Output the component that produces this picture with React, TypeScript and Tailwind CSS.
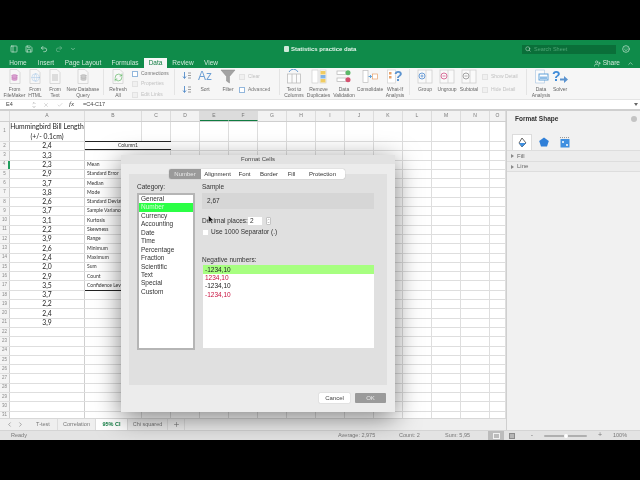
import React from "react";
import { ChevronUp, ChevronDown, Search, Smile, UserPlus, X, Check, Plus, ChevronLeft, ChevronRight, Undo2, Redo2, Save, PanelLeft, RefreshCw, Globe, Database } from "lucide-react";

const colWidths = [10, 75, 57, 29, 29, 29, 29, 29, 29, 29, 29, 29, 29, 29, 29, 16];
const colNames = ["", "A", "B", "C", "D", "E", "F", "G", "H", "I", "J", "K", "L", "M", "N", "O"];
const values = ["2,4", "3,3", "2,3", "2,9", "3,7", "3,8", "2,6", "3,7", "3,1", "2,2", "3,9", "2,6", "2,4", "2,0", "2,9", "3,5", "3,7", "2,2", "2,4", "3,9"];
const stats: Record<number, string> = {
  4: "Mean", 5: "Standard Error", 6: "Median", 7: "Mode", 8: "Standard Deviation", 9: "Sample Variance", 10: "Kurtosis",
  11: "Skewness", 12: "Range", 13: "Minimum", 14: "Maximum", 15: "Sum", 16: "Count", 17: "Confidence Level(95,0%)",
};
const categories = ["General", "Number", "Currency", "Accounting", "Date", "Time", "Percentage", "Fraction", "Scientific", "Text", "Special", "Custom"];
const tabs = [
  { label: "Home", w: "w-[28px]" }, { label: "Insert", w: "w-[28px]" }, { label: "Page Layout", w: "w-[46px]" }, { label: "Formulas", w: "w-[38px]" },
  { label: "Data", w: "w-[23px]", active: true }, { label: "Review", w: "w-[32px]" }, { label: "View", w: "w-[24px]" },
];

function DocIcon({ children }: { children?: React.ReactNode }) {
  return (
    <span className="relative flex items-center justify-center w-[14px] h-[15px]">
      <svg width="14" height="15" viewBox="0 0 14 15">
        <path d="M2 .5h7l3 3v11H2z" fill="#f7f7f7" stroke="#d2d2d2" strokeWidth="0.8" />
      </svg>
      <span className="absolute inset-0 flex items-center justify-center pt-[2px]">{children}</span>
    </span>
  );
}

function FilterIcon() {
  return (
    <svg width="16" height="15" viewBox="0 0 16 15">
      <path d="M1 1h14L9.500 7.500V14l-3-2V7.500z" fill="#a3a3a3" stroke="#8a8a8a" strokeWidth="0.5" />
    </svg>
  );
}

function GroupIcon({ accent, mark }: { accent: string; mark: string }) {
  return (
    <svg width="16" height="15" viewBox="0 0 16 15">
      <rect x="1" y="1" width="14" height="13" fill="#fafafa" stroke="#cfcfcf" strokeWidth="0.8" />
      <path d="M9 1v13" stroke="#cfcfcf" strokeWidth="0.8" />
      <circle cx="5" cy="7" r="3" fill="none" stroke={accent} strokeWidth="0.9" />
      <path d={mark} stroke={accent} strokeWidth="0.8" />
    </svg>
  );
}

function TextToColumnsIcon() {
  return (
    <svg width="16" height="15" viewBox="0 0 16 15">
      <path d="M3 3 A5 5 0 0 1 12 3" fill="none" stroke="#5b93cf" strokeWidth="0.9" />
      <rect x="1.500" y="5" width="13" height="9" fill="#fbfbfb" stroke="#bdbdbd" strokeWidth="0.8" />
      <path d="M6 5v9M10.500 5v9" stroke="#bdbdbd" strokeWidth="0.8" />
    </svg>
  );
}

function DuplicatesIcon() {
  return (
    <svg width="16" height="15" viewBox="0 0 16 15">
      <rect x="1" y="1" width="6" height="13" fill="#fff" stroke="#cfcfcf" strokeWidth="0.7" />
      <rect x="9" y="1" width="6" height="13" fill="#fff" stroke="#cfcfcf" strokeWidth="0.7" />
      <rect x="9.500" y="2" width="5" height="3.500" fill="#f0cc62" />
      <rect x="9.500" y="6" width="5" height="3.500" fill="#7fb2e5" />
      <rect x="9.500" y="10" width="5" height="3.500" fill="#f0cc62" />
    </svg>
  );
}

function ValidationIcon() {
  return (
    <svg width="16" height="15" viewBox="0 0 16 15">
      <rect x="1" y="2" width="9" height="3.500" fill="#fff" stroke="#b5b5b5" strokeWidth="0.7" />
      <rect x="1" y="9" width="9" height="3.500" fill="#fff" stroke="#b5b5b5" strokeWidth="0.7" />
      <circle cx="12" cy="3.700" r="2.500" fill="#5cb868" />
      <circle cx="12" cy="10.700" r="2.500" fill="#d4506e" />
    </svg>
  );
}

function ConsolidateIcon() {
  return (
    <svg width="16" height="15" viewBox="0 0 16 15">
      <rect x="1" y="1.500" width="5" height="12" fill="#fff" stroke="#bdbdbd" strokeWidth="0.7" />
      <rect x="10.500" y="5" width="5" height="5" fill="#fff" stroke="#e8a26a" strokeWidth="0.7" />
      <path d="M6.500 7.500h3M8 6l1.500 1.500L8 9" fill="none" stroke="#4f97d6" strokeWidth="0.9" />
    </svg>
  );
}

function WhatIfIcon() {
  return (
    <span className="flex items-center w-[16px] h-[15px] relative">
      <svg width="10" height="15" viewBox="0 0 10 15">
        <rect x=".5" y="1" width="8" height="13" fill="#fff" stroke="#d2d2d2" strokeWidth="0.7" />
        <rect x="2" y="3" width="2.500" height="2.500" fill="#e8a26a" />
        <rect x="2" y="7" width="2.500" height="2.500" fill="#e8a26a" />
      </svg>
      <span className="text-[14px] leading-[15px] font-bold text-[#5b93cf] -ml-[3px]">?</span>
    </span>
  );
}

function AnalysisIcon() {
  return (
    <svg width="15" height="15" viewBox="0 0 15 15">
      <path d="M1.500 1h9v13h-9z" fill="#fbfbfb" stroke="#b9cfe6" strokeWidth="0.8" />
      <rect x="5" y="5" width="9" height="6" fill="#fff" stroke="#4f97d6" strokeWidth="0.9" />
      <rect x="6" y="7.500" width="7" height="2.500" fill="#8fbde6" />
    </svg>
  );
}

function SolverIcon() {
  return (
    <span className="flex items-center relative w-[16px] h-[15px]">
      <span className="text-[14px] leading-[15px] font-bold text-[#3f8bd8]">?</span>
      <svg width="8" height="7" viewBox="0 0 8 7" className="-ml-[1px] mt-[6px]">
        <path d="M0 2.500h4V0l4 3.500L4 7V4.500H0z" fill="#5b93cf" />
      </svg>
    </span>
  );
}

function SortIcon() {
  return (
    <svg width="10" height="7" viewBox="0 0 10 7">
      <path d="M2.500 0v6M1 4.500 2.500 6.500 4 4.500" fill="none" stroke="#3f7fc4" strokeWidth="0.8" />
      <path d="M6 1h3M6 3.500h3M6 6h3" stroke="#888" strokeWidth="0.8" />
    </svg>
  );
}

function RibbonItem({ w, icon, lines }: { w: string; icon: React.ReactNode; lines: string[] }) {
  return (
    <div className={`${w} shrink-0 flex flex-col items-center`}>
      <div className="h-[15px] flex items-center justify-center">{icon}</div>
      <div className="text-[5px] leading-[6px] text-[#666] text-center whitespace-nowrap mt-[2px]">
        {lines.map((l) => (
          <div key={l}>{l}</div>
        ))}
      </div>
    </div>
  );
}

type StackItem = { label: string; on?: boolean };

function SmallStack({ w, items, gap, top }: { w: string; items: StackItem[]; gap: string; top: string }) {
  return (
    <div className={`${w} ${gap} ${top} shrink-0 flex flex-col`}>
      {items.map((t) => (
        <div key={t.label} className="flex items-center gap-[3px] h-[7px]">
          <span className={`w-[6px] h-[6px] border ${t.on ? "border-[#93b7dc] bg-white" : "border-[#e2e2e2] bg-[#f0f0f0]"}`} />
          <span className={`text-[5px] whitespace-nowrap ${t.on ? "text-[#777]" : "text-[#c2c2c2]"}`}>{t.label}</span>
        </div>
      ))}
    </div>
  );
}

function Sep() {
  return <div className="w-px h-[26px] bg-[#e4e4e4] shrink-0 mx-[2px]" />;
}

function Ribbon() {
  return (
    <div className="h-[32px] bg-[#f6f6f6] flex items-start pl-[4px] pt-[1px] border-b border-[#e4e4e4] overflow-hidden">
      <RibbonItem w="w-[21px]" icon={<DocIcon><Database size={7} color="#b64fa5" fill="#d8a0cf" strokeWidth={1} /></DocIcon>} lines={["From", "FileMaker"]} />
      <RibbonItem w="w-[20px]" icon={<DocIcon><Globe size={9} color="#8fb8e3" strokeWidth={1} /></DocIcon>} lines={["From", "HTML"]} />
      <RibbonItem w="w-[20px]" icon={<DocIcon><span className="w-[6px] h-[7px] bg-[#dcdcdc]" /></DocIcon>} lines={["From", "Text"]} />
      <RibbonItem w="w-[36px]" icon={<DocIcon><Database size={7} color="#999" fill="#ccc" strokeWidth={1} /></DocIcon>} lines={["New Database", "Query"]} />
      <Sep />
      <RibbonItem w="w-[24px]" icon={<DocIcon><RefreshCw size={9} color="#4caf50" strokeWidth={1.6} /></DocIcon>} lines={["Refresh", "All"]} />
      <div className="w-[2px] shrink-0" />
      <SmallStack
        w="w-[40px]"
        gap="gap-[3.500px]"
        top="pt-[1px]"
        items={[{ label: "Connections", on: true }, { label: "Properties" }, { label: "Edit Links" }]}
      />
      <Sep />
      <div className="w-[16px] shrink-0 ml-[2px] flex flex-col items-center gap-[7px] pt-[3px]">
        <SortIcon />
        <SortIcon />
      </div>
      <RibbonItem w="w-[20px]" icon={<span className="text-[12px] leading-[15px] text-[#6c9fd4]">Az</span>} lines={["Sort"]} />
      <div className="w-[2px] shrink-0" />
      <RibbonItem w="w-[22px]" icon={<FilterIcon />} lines={["Filter"]} />
      <SmallStack w="w-[38px]" gap="gap-[6px]" top="pt-[4px]" items={[{ label: "Clear" }, { label: "Advanced", on: true }]} />
      <Sep />
      <RibbonItem w="w-[24px]" icon={<TextToColumnsIcon />} lines={["Text to", "Columns"]} />
      <RibbonItem w="w-[25px]" icon={<DuplicatesIcon />} lines={["Remove", "Duplicates"]} />
      <RibbonItem w="w-[26px]" icon={<ValidationIcon />} lines={["Data", "Validation"]} />
      <RibbonItem w="w-[26px]" icon={<ConsolidateIcon />} lines={["Consolidate"]} />
      <RibbonItem w="w-[24px]" icon={<WhatIfIcon />} lines={["What-If", "Analysis"]} />
      <Sep />
      <div className="w-[2px] shrink-0" />
      <RibbonItem w="w-[22px]" icon={<GroupIcon accent="#5c93d1" mark="M3.500 7h3M5 5.500v3" />} lines={["Group"]} />
      <RibbonItem w="w-[22px]" icon={<GroupIcon accent="#d4608f" mark="M3.500 7h3" />} lines={["Ungroup"]} />
      <RibbonItem w="w-[22px]" icon={<GroupIcon accent="#999999" mark="M3.500 7h3" />} lines={["Subtotal"]} />
      <div className="w-[2px] shrink-0" />
      <SmallStack w="w-[42px]" gap="gap-[6px]" top="pt-[4px]" items={[{ label: "Show Detail" }, { label: "Hide Detail" }]} />
      <Sep />
      <div className="w-[2px] shrink-0" />
      <RibbonItem w="w-[20px]" icon={<AnalysisIcon />} lines={["Data", "Analysis"]} />
      <RibbonItem w="w-[18px]" icon={<SolverIcon />} lines={["Solver"]} />
    </div>
  );
}

function ColumnHeader() {
  return (
    <div className="flex h-[11px] bg-[#f2f2f2] border-b border-[#cfcfcf] shrink-0">
      {colNames.map((name, i) => (
        <div
          key={i}
          style={{ width: colWidths[i] }}
          className={`shrink-0 h-full flex items-center justify-center text-[5px] text-[#777] border-r border-[#dcdcdc] ${name === "E" || name === "F" ? "bg-[#dcdcdc] border-b border-b-[#107c41]" : ""}`}
        >
          {name}
        </div>
      ))}
    </div>
  );
}

function SheetRow({ row }: { row: number }) {
  const value = row >= 2 && row <= 21 ? values[row - 2] : null;
  const stat = stats[row];
  return (
    <div className={`flex shrink-0 ${row === 1 ? "h-[20px]" : "h-[9.3px]"} border-b border-[#dedede]`}>
      <div
        style={{ width: colWidths[0] }}
        className={`shrink-0 flex items-center justify-center text-[4.500px] text-[#888] bg-[#f4f4f4] ${row === 4 ? "border-r-2 border-[#1f9d5c]" : "border-r border-[#cfcfcf]"}`}
      >
        {row}
      </div>
      <div style={{ width: colWidths[1] }} className="shrink-0 flex flex-col items-center justify-center border-r border-[#cfcfcf] font-['Lato',sans-serif] text-[6.800px] leading-[9.500px] text-[#222] bg-white whitespace-nowrap">
        {row === 1 ? (
          <>
            <div>Hummingbird Bill Length</div>
            <div>(+/- 0.1cm)</div>
          </>
        ) : (
          value
        )}
      </div>
      {row === 2 ? (
        <div style={{ width: colWidths[2] + colWidths[3] }} className="shrink-0 -mt-px h-[calc(100%+1px)] flex items-center justify-center border-t border-b border-[#222] font-['Lato',sans-serif] text-[5px] text-[#333] bg-white">
          Column1
        </div>
      ) : (
        <>
          <div
            style={{ width: colWidths[2] }}
            className={`shrink-0 flex items-center pl-[2px] font-['Lato',sans-serif] text-[5px] text-[#333] bg-white whitespace-nowrap border-r ${row === 3 || stat ? "border-transparent" : "border-[#dedede]"} ${row === 17 ? "-mb-px h-[calc(100%+1px)] border-b border-b-[#222]" : ""}`}
          >
            {stat}
          </div>
          <div style={{ width: colWidths[3] }} className={`shrink-0 bg-white border-r border-[#dedede] ${row === 17 ? "-mb-px h-[calc(100%+1px)] border-b border-b-[#222]" : ""}`} />
        </>
      )}
      {colWidths.slice(4).map((w, i) => (
        <div key={i} style={{ width: w }} className="shrink-0 bg-white border-r border-[#dedede]" />
      ))}
    </div>
  );
}

function SheetTabs() {
  const sheets = [
    { name: "T-test", w: "w-[29px]" },
    { name: "Correlation", w: "w-[38px]" },
    { name: "95% CI", w: "w-[32px]", active: true },
    { name: "Chi squared", w: "w-[40px]" },
  ];
  return (
    <div className="h-[12px] bg-[#efefef] border-t border-[#d8d8d8] flex items-center shrink-0">
      <div className="w-[29px] shrink-0 flex items-center justify-center gap-[4px] text-[#777]">
        <ChevronLeft size={7} strokeWidth={2} />
        <ChevronRight size={7} strokeWidth={2} />
      </div>
      {sheets.map((s) => (
        <div
          key={s.name}
          className={`${s.w} shrink-0 h-full flex items-center justify-center text-[5.500px] border-r border-[#dcdcdc] ${s.active ? "bg-white text-[#107c41] font-semibold" : "text-[#777]"}`}
        >
          {s.name}
        </div>
      ))}
      <div className="w-[17px] shrink-0 h-full flex items-center justify-center border-r border-[#dcdcdc] text-[#777]">
        <Plus size={7} strokeWidth={2} />
      </div>
    </div>
  );
}

function FormatPanel() {
  return (
    <div className="w-[134px] shrink-0 bg-[#f1f1f1] border-l border-[#cfcfcf] flex flex-col">
      <div className="h-[16px] flex items-center justify-between pl-[8px] pr-[3px]">
        <span className="text-[6.500px] font-bold text-[#333]">Format Shape</span>
        <span className="w-[6px] h-[6px] rounded-full bg-[#c4c4c4]" />
      </div>
      <div className="flex items-end pl-[5px] h-[23px]">
        <div className="w-[20px] h-[16px] bg-white border border-b-0 border-[#dcdcdc] flex items-center justify-center">
          <svg width="11" height="11" viewBox="0 0 11 11">
            <path d="M5 1 L9 6 L5 10 L2 6 Z" fill="none" stroke="#555" strokeWidth="0.9" />
            <path d="M2 6 L9 6 L5 10 Z" fill="#3f8fe0" />
          </svg>
        </div>
        <div className="w-[22px] h-[16px] flex items-center justify-center ml-[1px]">
          <svg width="10" height="10" viewBox="0 0 10 10">
            <path d="M5 .5 L9.800 4 L8 9.500 H2 L.2 4 Z" fill="#2f7fd8" />
          </svg>
        </div>
        <div className="w-[20px] h-[16px] flex items-center justify-center">
          <svg width="10" height="11" viewBox="0 0 10 11">
            <rect x=".5" y="2" width="9" height="8.500" fill="#3f8fe0" />
            <path d="M0 .6H10" stroke="#777" strokeWidth=".8" strokeDasharray="1 1" />
            <circle cx="3" cy="5" r="1" fill="#fff" />
            <circle cx="7" cy="8" r="1" fill="#fff" />
          </svg>
        </div>
      </div>
      {["Fill", "Line"].map((s) => (
        <div key={s} className="h-[11px] bg-[#ececec] border-t border-[#dddddd] flex items-center pl-[4px] gap-[3px] last:border-b">
          <span className="border-y-[2px] border-l-[3px] border-y-transparent border-l-[#888]" />
          <span className="text-[6px] text-[#666]">{s}</span>
        </div>
      ))}
    </div>
  );
}

function StatusBar() {
  return (
    <div className="h-[10px] bg-[#e3e3e3] border-t border-[#d4d4d4] flex items-center text-[5.500px] text-[#777] shrink-0">
      <span className="pl-[11px] w-[338px] shrink-0">Ready</span>
      <span className="w-[61px] shrink-0 whitespace-nowrap">Average: 2,975</span>
      <span className="w-[46px] shrink-0 whitespace-nowrap">Count: 2</span>
      <span className="w-[43px] shrink-0 whitespace-nowrap">Sum: 5,95</span>
      <div className="w-[16px] h-full shrink-0 bg-[#bcbcbc] flex items-center justify-center">
        <span className="w-[7px] h-[6px] border border-[#f2f2f2]" />
      </div>
      <div className="w-[16px] shrink-0 flex items-center justify-center">
        <span className="w-[6px] h-[6px] border border-[#8a8a8a] bg-[#b5b5b5]" />
      </div>
      <span className="w-[24px] shrink-0 text-center text-[7px]">-</span>
      <div className="w-[43px] h-[2px] rounded-full bg-[#b0b0b0] shrink-0 flex items-center pl-[20px]">
        <span className="w-[4px] h-[4px] rounded-full bg-white" />
      </div>
      <span className="w-[26px] shrink-0 text-center text-[7px]">+</span>
      <span className="whitespace-nowrap">100%</span>
    </div>
  );
}

function FormatCellsDialog() {
  return (
    <div className="absolute left-[121px] top-[155px] w-[274px] h-[257px] bg-[#ececec] rounded-t-[3px] shadow-[0_6px_26px_rgba(0,0,0,0.5)] flex flex-col px-[8px] text-[6.500px] text-[#333]">
      <div className="h-[9px] -mx-[8px] bg-[#e2e2e2] flex items-center justify-center text-[6px] text-[#444] shrink-0">Format Cells</div>
      <div className="relative mt-[10px] h-[211px] bg-[#e0e0e0] px-[8px] shrink-0">
        <div className="absolute -top-[5px] left-[40px] w-[176px] h-[10px] bg-white rounded-[2px] shadow-[0_0_1px_rgba(0,0,0,0.4)] flex items-center text-[6px] text-[#333]">
          <span className="w-[32px] h-full rounded-l-[2px] bg-[#9a9a9a] text-[#e8e8e8] flex items-center justify-center">Number</span>
          <span className="w-[33px] text-center">Alignment</span>
          <span className="w-[21px] text-center">Font</span>
          <span className="w-[28px] text-center">Border</span>
          <span className="w-[17px] text-center">Fill</span>
          <span className="w-[45px] text-center">Protection</span>
        </div>
        <div className="flex pt-[8px]">
          <div className="w-[58px] shrink-0">
            <div className="h-[11px] leading-[10px]">Category:</div>
            <div className="h-[157px] bg-white border-2 border-[#b5b5b5]">
              {categories.map((c) => (
                <div key={c} className={`h-[8.450px] leading-[8.450px] px-[2px] ${c === "Number" ? "bg-[#2bff45] text-[#d8ffd8]" : ""}`}>
                  {c}
                </div>
              ))}
            </div>
          </div>
          <div className="ml-[7px] w-[172px] shrink-0">
            <div className="h-[11px] leading-[10px]">Sample</div>
            <div className="h-[16px] bg-[#d6d6d6] flex items-center pl-[5px]">2,67</div>
            <div className="flex items-center mt-[8px] h-[8px]">
              <span className="w-[46px] whitespace-nowrap">Decimal places:</span>
              <span className="w-[14px] h-[8px] bg-white flex items-center pl-[2px]">2</span>
              <span className="ml-[4px] w-[5px] h-[8px] bg-white rounded-[1px] border border-[#c4c4c4] flex flex-col items-center justify-center text-[#555]">
                <ChevronUp size={3} strokeWidth={3} />
                <ChevronDown size={3} strokeWidth={3} />
              </span>
            </div>
            <div className="flex items-center mt-[3px] h-[8px]">
              <span className="w-[5px] h-[5px] bg-white ml-[1px] mr-[3px]" />
              <span className="whitespace-nowrap">Use 1000 Separator (.)</span>
            </div>
            <div className="mt-[19px] h-[10px] leading-[9px]">Negative numbers:</div>
            <div className="ml-[1px] h-[83px] bg-white">
              <div className="h-[9px] leading-[9px] pl-[2px] bg-[#a7ff80] text-[#222]">-1234,10</div>
              <div className="h-[8.450px] leading-[8.450px] pl-[2px] text-[#c9103f]">1234,10</div>
              <div className="h-[8.450px] leading-[8.450px] pl-[2px] text-[#222]">-1234,10</div>
              <div className="h-[8.450px] leading-[8.450px] pl-[2px] text-[#c9103f]">-1234,10</div>
            </div>
          </div>
        </div>
      </div>
      <div className="flex justify-end gap-[5px] mt-[8px] pr-[1px]">
        <button className="w-[31px] h-[10px] bg-white rounded-[1px] text-[6px] leading-[10px] text-[#444] shadow-[0_0_1px_rgba(0,0,0,0.4)]">Cancel</button>
        <button className="w-[31px] h-[10px] bg-[#9a9a9a] rounded-[1px] text-[6px] leading-[10px] text-[#e8e8e8]">OK</button>
      </div>
      <svg className="absolute left-[87px] top-[60px]" width="6" height="9" viewBox="0 0 6 9">
        <path d="M.5 .5 V7.500 L2.300 6 L3.500 8.500 L4.500 8 L3.400 5.500 H5.500 Z" fill="#111" stroke="#fff" strokeWidth=".4" />
      </svg>
    </div>
  );
}

export default function App() {
  const rows = Array.from({ length: 31 }, (_, i) => i + 1);
  return (
    <div className="relative w-[640px] h-[480px] bg-black overflow-hidden font-['Liberation_Sans',sans-serif] blur-[0.35px]">
      <div className="h-[40px]" />
      <div className="h-[18px] bg-[#0f8b4a] flex items-center text-white">
        <div className="flex items-center gap-[7px] pl-[10px] w-[284px] shrink-0 text-[#cfe9da]">
          <PanelLeft size={8} />
          <Save size={8} />
          <Undo2 size={8} />
          <Redo2 size={8} className="opacity-50" />
          <ChevronDown size={6} />
        </div>
        <div className="w-[238px] shrink-0 flex items-center gap-[2px] text-[6px] font-bold text-[#e4f3ea] whitespace-nowrap">
          <span className="w-[5px] h-[6px] bg-[#cfe9da] rounded-[1px]" />
          Statistics practice data
        </div>
        <div className="w-[94px] h-[9px] shrink-0 bg-[#0a6f39] flex items-center pl-[3px] gap-[3px] text-[5.500px] text-[#4fa776]">
          <Search size={6} color="#cfe9da" />
          <span>Search Sheet</span>
        </div>
        <Smile size={8} className="ml-[6px] text-[#cfe9da]" />
      </div>
      <div className="h-[10px] bg-[#0f8b4a] flex items-stretch text-[6.500px] text-[#cfe9da]">
        <div className="w-[4px] shrink-0" />
        {tabs.map((t) => (
          <div
            key={t.label}
            className={`${t.w} shrink-0 flex items-center justify-center whitespace-nowrap ${t.active ? "bg-[#f6f6f6] text-[#107c41]" : ""}`}
          >
            {t.label}
          </div>
        ))}
        <div className="ml-auto flex items-center gap-[2px] pr-[6px]">
          <UserPlus size={7} />
          <span className="mr-[5px]">Share</span>
          <ChevronUp size={7} />
        </div>
      </div>
      <Ribbon />
      <div className="h-[11px] bg-white border-b-2 border-[#cfcfcf] flex items-center text-[5.500px] text-[#444]">
        <span className="w-[30px] pl-[6px] shrink-0">E4</span>
        <span className="w-[8px] shrink-0 flex flex-col items-center text-[#777]">
          <ChevronUp size={4} strokeWidth={3} />
          <ChevronDown size={4} strokeWidth={3} />
        </span>
        <X size={6} className="ml-[5px] text-[#b5b5b5]" />
        <Check size={6} className="ml-[8px] text-[#b5b5b5]" />
        <span className="ml-[6px] w-[14px] shrink-0 italic font-['Liberation_Serif',serif] text-[7px]">fx</span>
        <span>=C4-C17</span>
        <span className="ml-auto mr-[2px] border-x-[2px] border-t-[3px] border-x-transparent border-t-[#666]" />
      </div>
      <div className="flex h-[319px]">
        <div className="w-[506px] shrink-0 flex flex-col overflow-hidden">
          <ColumnHeader />
          <div className="flex-1 overflow-hidden bg-white">
            {rows.map((r) => (
              <SheetRow key={r} row={r} />
            ))}
          </div>
          <SheetTabs />
        </div>
        <FormatPanel />
      </div>
      <StatusBar />
      <FormatCellsDialog />
    </div>
  );
}
